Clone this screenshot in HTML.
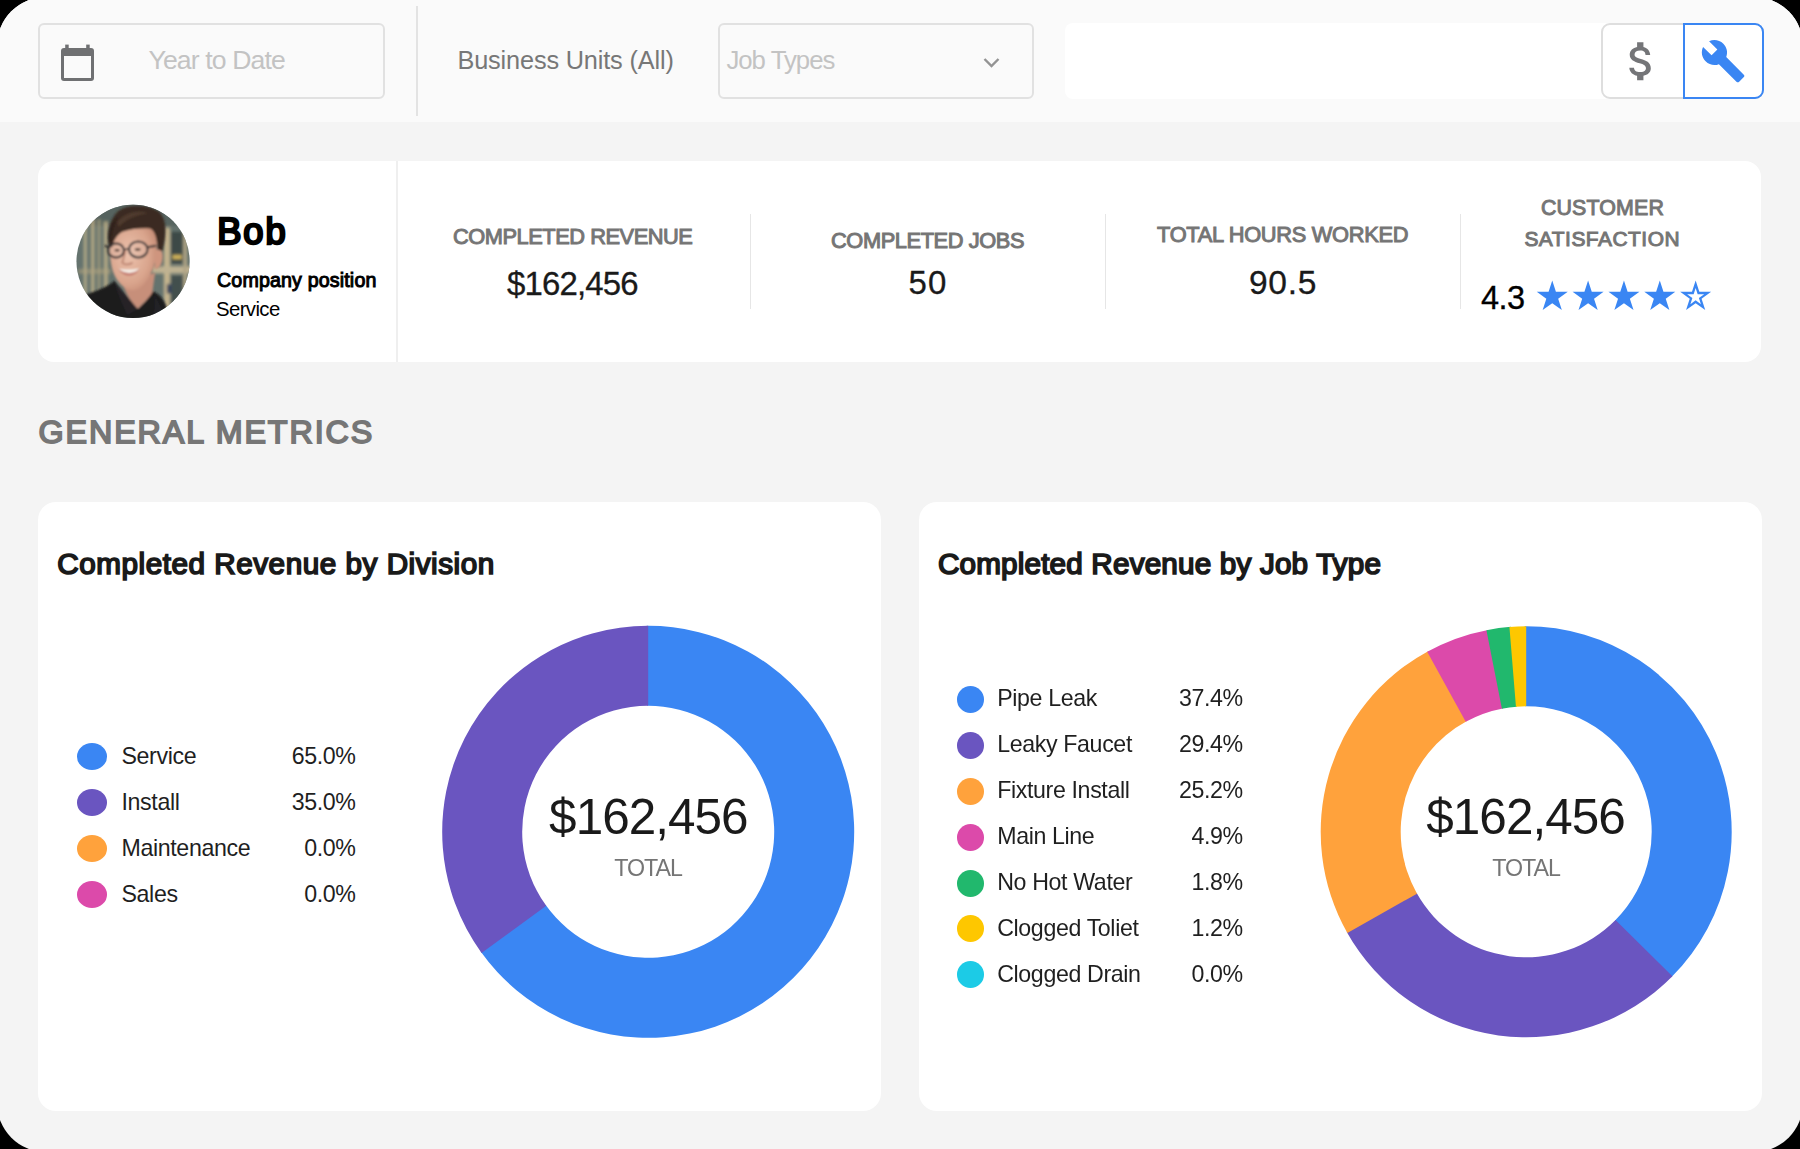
<!DOCTYPE html>
<html><head><meta charset="utf-8"><style>
html,body{margin:0;padding:0;width:1800px;height:1149px;overflow:hidden;background:#000;}
#s{position:absolute;left:-3px;top:-3px;width:1806px;height:1155px;border-radius:49px;background:#f4f4f4;overflow:hidden;}
#c{position:absolute;left:3px;top:3px;width:1800px;height:1149px;}
.t{position:absolute;font-family:"Liberation Sans",sans-serif;white-space:nowrap;}
.a{position:absolute;}
</style></head><body><div id="s"><div id="c">
<div class="a" style="left:0;top:0;width:1800px;height:122px;background:#fafafa"></div>
<div class="a" style="left:38px;top:23px;width:343px;height:72px;border:2px solid #e1e1e1;border-radius:6px"></div>
<svg class="a" style="left:0;top:0" width="200" height="122"><g fill="#6f7072">
<rect x="61" y="48" width="33" height="33" rx="3"/>
<rect x="65.2" y="44.6" width="3.5" height="5"/><rect x="86.2" y="44.6" width="3.5" height="5"/>
</g><rect x="64" y="56" width="27" height="22" fill="#fafafa"/></svg>
<div class="t" style="left:148.5px;top:45px;font-size:26.60px;line-height:30px;letter-spacing:-0.87px;color:#c3c3c3;">Year to Date</div>
<div class="a" style="left:416px;top:6px;width:2px;height:110px;background:#e3e3e3"></div>
<div class="t" style="left:457.5px;top:46px;font-size:25.29px;line-height:28px;letter-spacing:-0.15px;color:#777777;">Business Units (All)</div>
<div class="a" style="left:718px;top:23px;width:312px;height:72px;border:2px solid #e1e1e1;border-radius:6px"></div>
<div class="t" style="left:726.4px;top:46px;font-size:25.73px;line-height:28px;letter-spacing:-0.97px;color:#c3c3c3;">Job Types</div>
<svg class="a" style="left:980px;top:54px" width="24" height="18"><path d="M4.5,5 L11.5,12 L18.5,5" fill="none" stroke="#939393" stroke-width="2.4"/></svg>
<div class="a" style="left:1065px;top:23px;width:560px;height:76px;background:#fff;border-radius:8px"></div>
<div class="a" style="left:1601px;top:23px;width:158.7px;height:72px;border:2px solid #dedede;border-radius:9px;background:#fff"></div>
<div class="a" style="left:1683px;top:23px;width:76.7px;height:72px;border:2px solid #3a86f3;border-radius:0 9px 9px 0;background:#fff"></div>
<svg class="a" style="left:1616.06px;top:35.87px" width="50.64" height="50.64" viewBox="0 0 24 24"><path fill="#747578" d="M11.8 10.9c-2.27-.59-3-1.2-3-2.15 0-1.09 1.01-1.85 2.7-1.85 1.78 0 2.44.85 2.5 2.1h2.21c-.07-1.72-1.12-3.3-3.21-3.81V3h-3v2.16c-1.94.42-3.5 1.68-3.5 3.61 0 2.31 1.91 3.46 4.7 4.13 2.5.6 3 1.48 3 2.41 0 .69-.49 1.79-2.7 1.79-2.06 0-2.87-.92-2.98-2.1h-2.2c.12 2.19 1.76 3.42 3.68 3.83V21h3v-2.15c1.95-.37 3.5-1.5 3.5-3.55 0-2.84-2.43-3.81-4.7-4.4z"/></svg>
<svg class="a" style="left:1700.1px;top:38.1px" width="46.3" height="46.3" viewBox="0 0 24 24"><path fill="#3a86f3" d="M22.7 19l-9.1-9.1c.9-2.3.4-5-1.5-6.9-2-2-5-2.4-7.4-1.3L9 6 6 9 1.6 4.7C.4 7.1.9 10.1 2.9 12.1c1.9 1.9 4.6 2.4 6.9 1.5l9.1 9.1c.4.4 1 .4 1.4 0l2.3-2.3c.5-.4.5-1.1.1-1.4z"/></svg>
<div class="a" style="left:38px;top:161px;width:1723px;height:201px;background:#fff;border-radius:16px"></div>
<div class="a" style="left:396px;top:161px;width:2px;height:201px;background:#efefef"></div>
<div class="a" style="left:749.5px;top:214px;width:1.5px;height:95px;background:#e6e6e6"></div>
<div class="a" style="left:1104.5px;top:214px;width:1.5px;height:95px;background:#e6e6e6"></div>
<div class="a" style="left:1459.5px;top:214px;width:1.5px;height:95px;background:#e6e6e6"></div>
<svg class="a" style="left:74px;top:202px" width="118" height="118" viewBox="0 0 1149 1149">
<defs><clipPath id="cp"><circle cx="575" cy="578" r="551"/></clipPath>
<filter id="bl" x="-10%" y="-10%" width="120%" height="120%"><feGaussianBlur stdDeviation="9"/></filter>
<filter id="bl2"><feGaussianBlur stdDeviation="18"/></filter>
<radialGradient id="face" cx="0.4" cy="0.45" r="0.75"><stop offset="0" stop-color="#ecc2ad"/><stop offset="0.6" stop-color="#d9a48c"/><stop offset="1" stop-color="#b97d68"/></radialGradient>
</defs>
<g clip-path="url(#cp)">
<rect width="1149" height="1149" fill="#65736e"/>
<g filter="url(#bl2)">
<rect x="0" y="0" width="1149" height="230" fill="#56645f"/>
<rect x="95" y="150" width="30" height="900" fill="#c9b98f" opacity="0.75"/>
<rect x="165" y="160" width="34" height="880" fill="#c4b388" opacity="0.8"/>
<rect x="230" y="170" width="26" height="860" fill="#b9aa80" opacity="0.7"/>
<rect x="290" y="190" width="40" height="840" fill="#c8b78b" opacity="0.75"/>
<rect x="40" y="650" width="320" height="50" fill="#b3a57f" opacity="0.5"/>
<rect x="875" y="250" width="60" height="900" fill="#c4b48e"/>
<rect x="760" y="625" width="400" height="70" fill="#bfb292"/>
<rect x="945" y="290" width="115" height="310" fill="#3c4846"/>
<rect x="945" y="715" width="115" height="320" fill="#42504d"/>
<rect x="1065" y="250" width="35" height="900" fill="#b2a686"/>
<rect x="958" y="515" width="92" height="42" fill="#d6b65a"/>
<rect x="905" y="800" width="45" height="90" fill="#38445c"/>
</g>
<g filter="url(#bl)">
<path d="M470,790 C500,880 560,980 620,1040 L760,900 L790,690 Z" fill="#c78f7a"/>
<path d="M380,250 C340,360 340,560 380,680 C420,790 500,860 570,862 C650,860 720,770 770,650 C805,550 815,420 800,300 C760,220 480,200 380,250 Z" fill="url(#face)"/>
<path d="M790,470 C840,440 875,480 862,560 C850,630 815,660 785,650 Z" fill="#cf957e"/>
<path d="M345,440 C310,330 340,170 430,90 C530,20 700,20 820,90 C900,150 910,300 860,480 L815,460 C810,380 800,300 750,260 C680,250 560,260 470,290 C420,320 385,370 372,440 Z" fill="#3b2a21"/>
<path d="M420,200 C470,120 600,70 720,110 C650,120 520,150 440,240 Z" fill="#503b2e"/>
<path d="M330,350 C340,250 380,180 430,140 C390,220 370,300 360,400 Z" fill="#2e211a"/>
<ellipse cx="410" cy="472" rx="76" ry="68" fill="#e6cfc4" opacity="0.2"/>
<ellipse cx="626" cy="462" rx="90" ry="78" fill="#e6cfc4" opacity="0.2"/>
<ellipse cx="410" cy="472" rx="76" ry="68" fill="none" stroke="#2d2c2e" stroke-width="20"/>
<ellipse cx="626" cy="462" rx="90" ry="78" fill="none" stroke="#333235" stroke-width="20"/>
<path d="M300,425 L336,440" stroke="#2d2c2e" stroke-width="20"/>
<path d="M712,440 L800,425" stroke="#333235" stroke-width="20"/>
<path d="M486,470 C500,455 520,455 536,465" fill="none" stroke="#2d2c2e" stroke-width="14"/>
<ellipse cx="420" cy="470" rx="26" ry="12" fill="#4e3a32"/>
<ellipse cx="620" cy="462" rx="30" ry="12" fill="#4e3a32"/>
<path d="M500,470 C495,520 480,560 470,590 C490,615 540,615 570,590" fill="none" stroke="#b27866" stroke-width="14"/>
<path d="M430,648 C490,705 590,705 640,645 C580,662 490,662 430,648 Z" fill="#f6f1ea"/>
<path d="M430,648 C480,745 600,735 640,645 C600,700 500,712 430,648 Z" fill="#c47a70"/>
<path d="M110,905 C240,860 340,820 392,768 C450,890 530,980 620,1042 C690,985 745,915 770,870 C840,905 905,960 930,1149 L0,1149 Z" fill="#1c1b1e"/>
<path d="M392,768 C420,880 470,1000 520,1100 L620,1042 Z" fill="#252428"/>
<path d="M770,870 C800,960 790,1040 760,1149 L900,1149 Z" fill="#242327"/>
</g>
</g></svg>
<div class="t" style="left:217.2px;top:211px;font-size:36.34px;line-height:41px;letter-spacing:1.90px;color:#000;-webkit-text-stroke:2.4px #000;">Bob</div>
<div class="t" style="left:217.0px;top:269px;font-size:19.62px;line-height:22px;letter-spacing:0.16px;color:#000;-webkit-text-stroke:1.0px #000;">Company position</div>
<div class="t" style="left:216.0px;top:298px;font-size:20.35px;line-height:22px;letter-spacing:-0.60px;color:#000;">Service</div>
<div class="t" style="left:453.0px;top:224px;font-size:21.80px;line-height:25px;letter-spacing:-0.45px;color:#757575;-webkit-text-stroke:1.0px #757575;">COMPLETED REVENUE</div>
<div class="t" style="left:507.0px;top:265px;font-size:32.99px;line-height:37px;letter-spacing:-0.86px;color:#1a1a1a;-webkit-text-stroke:0.3px #1a1a1a;">$162,456</div>
<div class="t" style="left:831.0px;top:228px;font-size:21.80px;line-height:25px;letter-spacing:-0.40px;color:#757575;-webkit-text-stroke:1.0px #757575;">COMPLETED JOBS</div>
<div class="t" style="left:908.6px;top:264px;font-size:32.99px;line-height:37px;letter-spacing:1.00px;color:#1a1a1a;-webkit-text-stroke:0.3px #1a1a1a;">50</div>
<div class="t" style="left:1157.0px;top:222px;font-size:21.80px;line-height:25px;letter-spacing:-0.29px;color:#757575;-webkit-text-stroke:1.0px #757575;">TOTAL HOURS WORKED</div>
<div class="t" style="left:1249.0px;top:264px;font-size:33.58px;line-height:37px;letter-spacing:0.67px;color:#1a1a1a;-webkit-text-stroke:0.3px #1a1a1a;">90.5</div>
<div class="t" style="left:1540.9px;top:196px;font-size:21.37px;line-height:24px;letter-spacing:0.17px;color:#757575;-webkit-text-stroke:1.0px #757575;">CUSTOMER</div>
<div class="t" style="left:1524.4px;top:227px;font-size:20.93px;line-height:23px;letter-spacing:0.51px;color:#757575;-webkit-text-stroke:1.0px #757575;">SATISFACTION</div>
<div class="t" style="left:1481.0px;top:280px;font-size:32.56px;line-height:36px;letter-spacing:-0.60px;color:#000;-webkit-text-stroke:0.3px #000;">4.3</div>
<svg class="a" style="left:1520px;top:270px" width="220" height="50"><polygon points="32.25,10.60 35.91,21.86 47.75,21.86 38.17,28.82 41.83,40.09 32.25,33.13 22.67,40.09 26.33,28.82 16.75,21.86 28.59,21.86" fill="#3a86f3"/><polygon points="68.10,10.60 71.76,21.86 83.60,21.86 74.02,28.82 77.68,40.09 68.10,33.13 58.52,40.09 62.18,28.82 52.60,21.86 64.44,21.86" fill="#3a86f3"/><polygon points="103.95,10.60 107.61,21.86 119.45,21.86 109.87,28.82 113.53,40.09 103.95,33.13 94.37,40.09 98.03,28.82 88.45,21.86 100.29,21.86" fill="#3a86f3"/><polygon points="139.80,10.60 143.46,21.86 155.30,21.86 145.72,28.82 149.38,40.09 139.80,33.13 130.22,40.09 133.88,28.82 124.30,21.86 136.14,21.86" fill="#3a86f3"/><path d="M175.65,10.60 L179.31,21.86 L191.15,21.86 L181.57,28.82 L185.23,40.09 L175.65,33.13 L166.07,40.09 L169.73,28.82 L160.15,21.86 L171.99,21.86 Z M175.65,17.93 L177.66,24.13 L184.18,24.13 L178.91,27.96 L180.92,34.15 L175.65,30.32 L170.38,34.15 L172.39,27.96 L167.12,24.13 L173.64,24.13 Z" fill="#3a86f3" fill-rule="evenodd"/></svg>
<div class="t" style="left:38.6px;top:414px;font-size:32.27px;line-height:36px;letter-spacing:1.89px;color:#767676;-webkit-text-stroke:1.8px #767676;">GENERAL METRICS</div>
<div class="a" style="left:38px;top:502px;width:843px;height:609px;background:#fff;border-radius:18px"></div>
<div class="a" style="left:919px;top:502px;width:842.7px;height:609px;background:#fff;border-radius:18px"></div>
<div class="t" style="left:57.3px;top:547px;font-size:29.65px;line-height:33px;letter-spacing:0.54px;color:#1a1a1a;-webkit-text-stroke:1.7px #1a1a1a;">Completed Revenue by Division</div>
<div class="t" style="left:937.9px;top:547px;font-size:29.65px;line-height:33px;letter-spacing:0.19px;color:#1a1a1a;-webkit-text-stroke:1.7px #1a1a1a;">Completed Revenue by Job Type</div>
<div class="a" style="left:76.7px;top:742.7px;width:30.3px;height:27px;border-radius:50%;background:#3a86f3"></div>
<div class="t" style="left:121.5px;top:743px;font-size:23.20px;line-height:26px;letter-spacing:-0.37px;color:#1f1f1f;">Service</div>
<div class="t" style="left:-244.4px;width:600px;text-align:right;top:743px;font-size:23.20px;line-height:26px;letter-spacing:-0.37px;color:#1f1f1f;">65.0%</div>
<div class="a" style="left:76.7px;top:788.6px;width:30.3px;height:27px;border-radius:50%;background:#6a55c0"></div>
<div class="t" style="left:121.5px;top:789px;font-size:23.20px;line-height:26px;letter-spacing:-0.37px;color:#1f1f1f;">Install</div>
<div class="t" style="left:-244.4px;width:600px;text-align:right;top:789px;font-size:23.20px;line-height:26px;letter-spacing:-0.37px;color:#1f1f1f;">35.0%</div>
<div class="a" style="left:76.7px;top:834.6px;width:30.3px;height:27px;border-radius:50%;background:#ffa23c"></div>
<div class="t" style="left:121.5px;top:835px;font-size:23.20px;line-height:26px;letter-spacing:-0.37px;color:#1f1f1f;">Maintenance</div>
<div class="t" style="left:-244.4px;width:600px;text-align:right;top:835px;font-size:23.20px;line-height:26px;letter-spacing:-0.37px;color:#1f1f1f;">0.0%</div>
<div class="a" style="left:76.7px;top:880.5px;width:30.3px;height:27px;border-radius:50%;background:#dc4aaa"></div>
<div class="t" style="left:121.5px;top:881px;font-size:23.20px;line-height:26px;letter-spacing:-0.37px;color:#1f1f1f;">Sales</div>
<div class="t" style="left:-244.4px;width:600px;text-align:right;top:881px;font-size:23.20px;line-height:26px;letter-spacing:-0.37px;color:#1f1f1f;">0.0%</div>
<svg class="a" style="left:0;top:0" width="900" height="1149"><path d="M646.65,625.81 A206,206 0 1 1 480.63,951.62 L545.71,905.09 A126,126 0 1 0 647.25,705.80 Z" fill="#3a86f3"/><path d="M481.54,952.88 A206,206 0 0 1 648.20,625.80 L648.20,705.80 A126,126 0 0 0 546.26,905.86 Z" fill="#6a55c0"/></svg>
<div class="t" style="left:549.1px;top:789px;font-size:49.42px;line-height:55px;letter-spacing:-0.94px;color:#1a1a1a;">$162,456</div>
<div class="t" style="left:614.2px;top:855px;font-size:23.26px;line-height:26px;letter-spacing:-1.00px;color:#757575;">TOTAL</div>
<div class="a" style="left:957px;top:685.8px;width:27.4px;height:27px;border-radius:50%;background:#3a86f3"></div>
<div class="t" style="left:997.2px;top:685px;font-size:23.20px;line-height:26px;letter-spacing:-0.37px;color:#1f1f1f;">Pipe Leak</div>
<div class="t" style="left:642.8px;width:600px;text-align:right;top:685px;font-size:23.20px;line-height:26px;letter-spacing:-0.37px;color:#1f1f1f;">37.4%</div>
<div class="a" style="left:957px;top:731.7px;width:27.4px;height:27px;border-radius:50%;background:#6a55c0"></div>
<div class="t" style="left:997.2px;top:731px;font-size:23.20px;line-height:26px;letter-spacing:-0.37px;color:#1f1f1f;">Leaky Faucet</div>
<div class="t" style="left:642.8px;width:600px;text-align:right;top:731px;font-size:23.20px;line-height:26px;letter-spacing:-0.37px;color:#1f1f1f;">29.4%</div>
<div class="a" style="left:957px;top:777.6px;width:27.4px;height:27px;border-radius:50%;background:#ffa23c"></div>
<div class="t" style="left:997.2px;top:777px;font-size:23.20px;line-height:26px;letter-spacing:-0.37px;color:#1f1f1f;">Fixture Install</div>
<div class="t" style="left:642.8px;width:600px;text-align:right;top:777px;font-size:23.20px;line-height:26px;letter-spacing:-0.37px;color:#1f1f1f;">25.2%</div>
<div class="a" style="left:957px;top:823.6px;width:27.4px;height:27px;border-radius:50%;background:#dc4aaa"></div>
<div class="t" style="left:997.2px;top:823px;font-size:23.20px;line-height:26px;letter-spacing:-0.37px;color:#1f1f1f;">Main Line</div>
<div class="t" style="left:642.8px;width:600px;text-align:right;top:823px;font-size:23.20px;line-height:26px;letter-spacing:-0.37px;color:#1f1f1f;">4.9%</div>
<div class="a" style="left:957px;top:869.5px;width:27.4px;height:27px;border-radius:50%;background:#21b86d"></div>
<div class="t" style="left:997.2px;top:869px;font-size:23.20px;line-height:26px;letter-spacing:-0.37px;color:#1f1f1f;">No Hot Water</div>
<div class="t" style="left:642.8px;width:600px;text-align:right;top:869px;font-size:23.20px;line-height:26px;letter-spacing:-0.37px;color:#1f1f1f;">1.8%</div>
<div class="a" style="left:957px;top:915.4px;width:27.4px;height:27px;border-radius:50%;background:#fec700"></div>
<div class="t" style="left:997.2px;top:915px;font-size:23.20px;line-height:26px;letter-spacing:-0.37px;color:#1f1f1f;">Clogged Toliet</div>
<div class="t" style="left:642.8px;width:600px;text-align:right;top:915px;font-size:23.20px;line-height:26px;letter-spacing:-0.37px;color:#1f1f1f;">1.2%</div>
<div class="a" style="left:957px;top:961.3px;width:27.4px;height:27px;border-radius:50%;background:#1ccbe6"></div>
<div class="t" style="left:997.2px;top:961px;font-size:23.20px;line-height:26px;letter-spacing:-0.37px;color:#1f1f1f;">Clogged Drain</div>
<div class="t" style="left:642.8px;width:600px;text-align:right;top:961px;font-size:23.20px;line-height:26px;letter-spacing:-0.37px;color:#1f1f1f;">0.0%</div>
<svg class="a" style="left:0;top:0" width="1800" height="1149"><path d="M1524.65,626.31 A205.5,205.5 0 0 1 1671.33,977.29 L1614.83,920.65 A125.5,125.5 0 0 0 1525.25,706.30 Z" fill="#3a86f3"/><path d="M1672.42,976.19 A205.5,205.5 0 0 1 1346.62,931.70 L1416.53,892.81 A125.5,125.5 0 0 0 1615.50,919.98 Z" fill="#6a55c0"/><path d="M1347.38,933.06 A205.5,205.5 0 0 1 1428.56,650.98 L1466.57,721.37 A125.5,125.5 0 0 0 1416.99,893.64 Z" fill="#ffa23c"/><path d="M1427.20,651.72 A205.5,205.5 0 0 1 1487.95,629.89 L1502.84,708.49 A125.5,125.5 0 0 0 1465.74,721.82 Z" fill="#dc4aaa"/><path d="M1486.43,630.19 A205.5,205.5 0 0 1 1510.98,626.86 L1516.90,706.64 A125.5,125.5 0 0 0 1501.91,708.67 Z" fill="#21b86d"/><path d="M1509.43,626.99 A205.5,205.5 0 0 1 1526.20,626.30 L1526.20,706.30 A125.5,125.5 0 0 0 1515.96,706.72 Z" fill="#fec700"/></svg>
<div class="t" style="left:1426.3px;top:789px;font-size:49.42px;line-height:55px;letter-spacing:-0.94px;color:#1a1a1a;">$162,456</div>
<div class="t" style="left:1492.2px;top:855px;font-size:23.26px;line-height:26px;letter-spacing:-1.00px;color:#757575;">TOTAL</div>
</div></div></body></html>
